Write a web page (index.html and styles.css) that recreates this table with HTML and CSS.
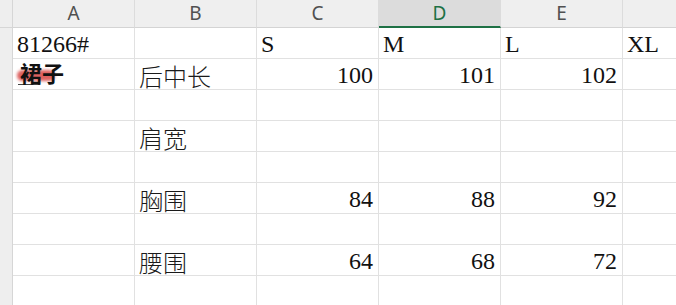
FILE: index.html
```html
<!DOCTYPE html>
<html>
<head>
<meta charset="utf-8">
<link rel="stylesheet" href="styles.css">
</head>
<body>
<div class="sheet">
  <div class="corner"></div>
  <div class="colhead">A</div>
  <div class="colhead">B</div>
  <div class="colhead">C</div>
  <div class="colhead active">D</div>
  <div class="colhead">E</div>
  <div class="colhead last"></div>

  <div class="rowhead"></div>
  <div class="cell">81266#</div>
  <div class="cell"></div>
  <div class="cell">S</div>
  <div class="cell">M</div>
  <div class="cell">L</div>
  <div class="cell">XL</div>

  <div class="rowhead"></div>
  <div class="cell"><span class="mark"><span class="smear"></span><span class="under"></span><span class="marktext">裙子</span></span></div>
  <div class="cell cjk">后中长</div>
  <div class="cell num">100</div>
  <div class="cell num">101</div>
  <div class="cell num">102</div>
  <div class="cell"></div>

  <div class="rowhead"></div>
  <div class="cell"></div><div class="cell"></div><div class="cell"></div><div class="cell"></div><div class="cell"></div><div class="cell"></div>

  <div class="rowhead"></div>
  <div class="cell"></div>
  <div class="cell cjk">肩宽</div>
  <div class="cell"></div><div class="cell"></div><div class="cell"></div><div class="cell"></div>

  <div class="rowhead"></div>
  <div class="cell"></div><div class="cell"></div><div class="cell"></div><div class="cell"></div><div class="cell"></div><div class="cell"></div>

  <div class="rowhead"></div>
  <div class="cell"></div>
  <div class="cell cjk">胸围</div>
  <div class="cell num">84</div>
  <div class="cell num">88</div>
  <div class="cell num">92</div>
  <div class="cell"></div>

  <div class="rowhead"></div>
  <div class="cell"></div><div class="cell"></div><div class="cell"></div><div class="cell"></div><div class="cell"></div><div class="cell"></div>

  <div class="rowhead"></div>
  <div class="cell"></div>
  <div class="cell cjk">腰围</div>
  <div class="cell num">64</div>
  <div class="cell num">68</div>
  <div class="cell num">72</div>
  <div class="cell"></div>

  <div class="rowhead"></div>
  <div class="cell"></div><div class="cell"></div><div class="cell"></div><div class="cell"></div><div class="cell"></div><div class="cell"></div>
</div>
</body>
</html>
```

FILE: styles.css
```css
html, body {
  margin: 0;
  padding: 0;
  background: #ffffff;
  overflow: hidden;
}

.sheet {
  display: grid;
  grid-template-columns: 13px repeat(5, 122px) 54px;
  grid-template-rows: 28px repeat(9, 31px);
  width: 676px;
}

.corner {
  background: #eeeeee;
  border-right: 1px solid #d6d6d6;
  border-bottom: 1px solid #d6d6d6;
  box-sizing: border-box;
}

.colhead {
  box-sizing: border-box;
  background: #efefef;
  border-right: 1px solid #dcdcdc;
  border-bottom: 1px solid #d4d4d4;
  display: flex;
  align-items: center;
  justify-content: center;
  font-family: "Noto Sans", "Open Sans", sans-serif;
  font-size: 19px;
  color: #505050;
  padding-bottom: 1px;
}

.colhead.active {
  background: #dcdcdc;
  color: #1e7145;
  border-bottom: 2px solid #1e7145;
  padding-bottom: 0;
}

.colhead.last {
  border-right: none;
}

.rowhead {
  box-sizing: border-box;
  background: #eeeeee;
  border-right: 1px solid #d6d6d6;
}

.cell {
  box-sizing: border-box;
  border-right: 1px solid #e1e1e1;
  border-bottom: 1px solid #e1e1e1;
  font-family: "Liberation Serif", "Noto Sans CJK SC", serif;
  font-size: 24px;
  line-height: 28px;
  color: #111111;
  padding: 2px 4px 0 4px;
  white-space: nowrap;
  overflow: visible;
  display: flex;
  align-items: flex-end;
}

.cell.cjk {
  font-family: "Noto Sans CJK SC", sans-serif;
  font-weight: 300;
  font-size: 24px;
  line-height: 26px;
  color: #1a1a1a;
}

.cell.num {
  justify-content: flex-end;
  padding-right: 5px;
}

.mark {
  position: relative;
  display: inline-block;
  margin-left: 3px;
  height: 28px;
  width: 50px;
}

.smear {
  position: absolute;
  left: -3px;
  top: 9px;
  width: 38px;
  height: 11px;
  background: #d9504e;
  border-radius: 6px;
  filter: blur(1.5px);
  opacity: 0.9;
}

.under {
  position: absolute;
  left: -2px;
  top: 23px;
  width: 22px;
  height: 1px;
  background: #444444;
}

.marktext {
  position: absolute;
  left: 0;
  top: -1px;
  font-family: "Noto Sans CJK SC", sans-serif;
  font-weight: 700;
  font-size: 22px;
  line-height: 24px;
  color: #111111;
}
```
